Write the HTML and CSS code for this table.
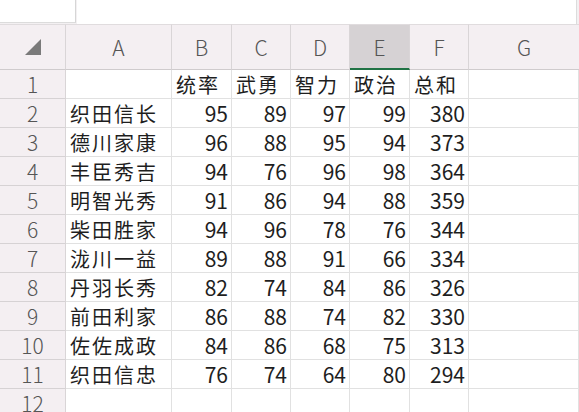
FILE: index.html
```html
<!DOCTYPE html>
<html lang="zh">
<head>
<meta charset="utf-8">
<link rel="stylesheet" href="styles.css">
</head>
<body>
<div class="topbar">
  <div class="namebox"></div>
  <div class="formula"></div>
</div>
<div class="sheet">
  <div class="hd corner"><span class="tri"></span></div>
  <div class="hd">A</div>
  <div class="hd">B</div>
  <div class="hd">C</div>
  <div class="hd">D</div>
  <div class="hd sel">E</div>
  <div class="hd">F</div>
  <div class="hd last">G</div>

  <div class="rh">1</div>
  <div class="c"></div>
  <div class="c t">统率</div>
  <div class="c t">武勇</div>
  <div class="c t">智力</div>
  <div class="c t">政治</div>
  <div class="c t">总和</div>
  <div class="c"></div>

  <div class="rh">2</div><div class="c t">织田信长</div><div class="c n">95</div><div class="c n">89</div><div class="c n">97</div><div class="c n">99</div><div class="c n">380</div><div class="c"></div>
  <div class="rh">3</div><div class="c t">德川家康</div><div class="c n">96</div><div class="c n">88</div><div class="c n">95</div><div class="c n">94</div><div class="c n">373</div><div class="c"></div>
  <div class="rh">4</div><div class="c t">丰臣秀吉</div><div class="c n">94</div><div class="c n">76</div><div class="c n">96</div><div class="c n">98</div><div class="c n">364</div><div class="c"></div>
  <div class="rh">5</div><div class="c t">明智光秀</div><div class="c n">91</div><div class="c n">86</div><div class="c n">94</div><div class="c n">88</div><div class="c n">359</div><div class="c"></div>
  <div class="rh">6</div><div class="c t">柴田胜家</div><div class="c n">94</div><div class="c n">96</div><div class="c n">78</div><div class="c n">76</div><div class="c n">344</div><div class="c"></div>
  <div class="rh">7</div><div class="c t">泷川一益</div><div class="c n">89</div><div class="c n">88</div><div class="c n">91</div><div class="c n">66</div><div class="c n">334</div><div class="c"></div>
  <div class="rh">8</div><div class="c t">丹羽长秀</div><div class="c n">82</div><div class="c n">74</div><div class="c n">84</div><div class="c n">86</div><div class="c n">326</div><div class="c"></div>
  <div class="rh">9</div><div class="c t">前田利家</div><div class="c n">86</div><div class="c n">88</div><div class="c n">74</div><div class="c n">82</div><div class="c n">330</div><div class="c"></div>
  <div class="rh">10</div><div class="c t">佐佐成政</div><div class="c n">84</div><div class="c n">86</div><div class="c n">68</div><div class="c n">75</div><div class="c n">313</div><div class="c"></div>
  <div class="rh">11</div><div class="c t">织田信忠</div><div class="c n">76</div><div class="c n">74</div><div class="c n">64</div><div class="c n">80</div><div class="c n">294</div><div class="c"></div>
  <div class="rh">12</div><div class="c"></div><div class="c"></div><div class="c"></div><div class="c"></div><div class="c"></div><div class="c"></div><div class="c"></div>
</div>
</body>
</html>
```
FILE: styles.css
```css
html, body {
  margin: 0;
  padding: 0;
  background: #ffffff;
  overflow: hidden;
  font-family: "Noto Sans CJK SC", "Noto Sans", sans-serif;
}
.topbar {
  display: flex;
  height: 24px;
  background: #f3f0f2;
}
.namebox {
  width: 76px;
  height: 23px;
  background: #fff;
  border-right: 1px solid #d6d6d6;
  border-bottom: 1px solid #dcdcdc;
  box-sizing: border-box;
}
.formula {
  width: 500px;
  height: 24px;
  background: #fff;
  border-right: 1px solid #dcdcdc;
  box-sizing: border-box;
  margin-left: 1px;
}
.sheet {
  display: grid;
  grid-template-columns: 66px 106px 60px 59px 59px 60px 59px 1fr;
  grid-template-rows: 46px repeat(12, 29px);
}
.hd {
  background: #f4eff2;
  border-right: 1px solid #d9d5d7;
  border-bottom: 1px solid #cfcbcd;
  border-top: 1px solid #e0dcde;
  display: flex;
  align-items: center;
  justify-content: center;
  font-size: 21px;
  color: #555;
  box-sizing: border-box;
  font-weight: 300;
}
.hd.last { border-right: none; }
.hd.sel {
  background: #d6d2d4;
  border-bottom: 2px solid #1f7244;
}
.corner { position: relative; }
.tri {
  width: 0;
  height: 0;
  border-left: 16px solid transparent;
  border-bottom: 16px solid #7a7a7a;
  margin-left: 0;
}
.rh {
  background: #f4eff2;
  border-right: 1px solid #d9d5d7;
  border-bottom: 1px solid #d6d2d4;
  display: flex;
  align-items: flex-end;
  justify-content: center;
  font-size: 21px;
  line-height: 27px;
  color: #555;
  font-weight: 300;
  box-sizing: border-box;
}
.c {
  border-right: 1px solid #e1e1e1;
  border-bottom: 1px solid #e1e1e1;
  box-sizing: border-box;
  display: flex;
  align-items: flex-end;
  font-size: 20px;
  line-height: 27px;
  color: #1e1e1e;
  white-space: nowrap;
  overflow: hidden;
}
.c.t {
  padding-left: 4px;
  letter-spacing: 2px;
}
.c.n {
  justify-content: flex-end;
  padding-right: 3px;
  font-size: 21px;
}
```
